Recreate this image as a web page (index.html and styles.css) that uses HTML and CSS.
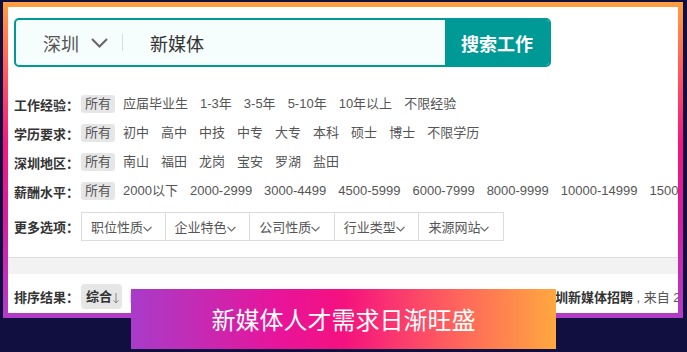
FILE: index.html
```html
<!DOCTYPE html>
<html lang="zh">
<head>
<meta charset="utf-8">
<link rel="stylesheet" href="styles.css">
</head>
<body>
<div class="frame">
  <div class="panel">
    <div class="search">
      <div class="city">
        <span>深圳</span>
        <svg class="chev" width="17" height="10" viewBox="0 0 17 10"><path d="M1 1 L8.5 8.5 L16 1" fill="none" stroke="#666" stroke-width="2"/></svg>
        <span class="divider"></span>
      </div>
      <div class="query">新媒体</div>
      <div class="btn">搜索工作</div>
    </div>

    <div class="filters">
      <div class="row">
        <span class="label">工作经验：</span>
        <span class="opt on">所有</span><span class="opt">应届毕业生</span><span class="opt">1-3年</span><span class="opt">3-5年</span><span class="opt">5-10年</span><span class="opt">10年以上</span><span class="opt">不限经验</span>
      </div>
      <div class="row">
        <span class="label">学历要求：</span>
        <span class="opt on">所有</span><span class="opt">初中</span><span class="opt">高中</span><span class="opt">中技</span><span class="opt">中专</span><span class="opt">大专</span><span class="opt">本科</span><span class="opt">硕士</span><span class="opt">博士</span><span class="opt">不限学历</span>
      </div>
      <div class="row">
        <span class="label">深圳地区：</span>
        <span class="opt on">所有</span><span class="opt">南山</span><span class="opt">福田</span><span class="opt">龙岗</span><span class="opt">宝安</span><span class="opt">罗湖</span><span class="opt">盐田</span>
      </div>
      <div class="row">
        <span class="label">薪酬水平：</span>
        <span class="opt on">所有</span><span class="opt">2000以下</span><span class="opt">2000-2999</span><span class="opt">3000-4499</span><span class="opt">4500-5999</span><span class="opt">6000-7999</span><span class="opt">8000-9999</span><span class="opt">10000-14999</span><span class="opt">15000-19999</span>
      </div>
      <div class="row more">
        <span class="label">更多选项：</span>
        <div class="boxes">
          <div class="box">职位性质<svg class="dd" width="9" height="6" viewBox="0 0 9 6"><path d="M0.5 0.8 L4.5 4.8 L8.5 0.8" fill="none" stroke="#666" stroke-width="1.2"/></svg></div>
          <div class="box">企业特色<svg class="dd" width="9" height="6" viewBox="0 0 9 6"><path d="M0.5 0.8 L4.5 4.8 L8.5 0.8" fill="none" stroke="#666" stroke-width="1.2"/></svg></div>
          <div class="box">公司性质<svg class="dd" width="9" height="6" viewBox="0 0 9 6"><path d="M0.5 0.8 L4.5 4.8 L8.5 0.8" fill="none" stroke="#666" stroke-width="1.2"/></svg></div>
          <div class="box">行业类型<svg class="dd" width="9" height="6" viewBox="0 0 9 6"><path d="M0.5 0.8 L4.5 4.8 L8.5 0.8" fill="none" stroke="#666" stroke-width="1.2"/></svg></div>
          <div class="box">来源网站<svg class="dd" width="9" height="6" viewBox="0 0 9 6"><path d="M0.5 0.8 L4.5 4.8 L8.5 0.8" fill="none" stroke="#666" stroke-width="1.2"/></svg></div>
        </div>
      </div>
    </div>

    <div class="sep"></div>

    <div class="row sort">
      <span class="label">排序结果：</span>
      <span class="sortchip">综合<svg class="arrow" width="6" height="11" viewBox="0 0 6 11"><path d="M3 0 V10 M0.6 7.4 L3 10 L5.4 7.4" fill="none" stroke="#888" stroke-width="1"/></svg></span>
      <span class="pipe">|</span>
      <span class="result"><b>深圳新媒体招聘</b> , 来自 23 个招聘网站</span>
    </div>
  </div>
</div>
<div class="banner">新媒体人才需求日渐旺盛</div>
</body>
</html>
```

FILE: styles.css
```css
html, body {
  margin: 0;
  padding: 0;
}
body {
  width: 687px;
  height: 352px;
  overflow: hidden;
  position: relative;
  background: #110f3f;
  font-family: "Liberation Sans", "Noto Sans CJK SC", sans-serif;
}
.frame {
  margin: 2px 0 0 3px;
  width: 680px;
  height: 316px;
  padding: 5px;
  box-sizing: border-box;
  background: linear-gradient(180deg, #ff9f40 0%, #ff5a5e 22%, #f4167f 45%, #d61e9f 70%, #b13cc9 100%);
}
.panel {
  background: #fff;
  height: 100%;
  overflow: hidden;
  padding: 11px 0 0 6px;
  box-sizing: border-box;
}
.search {
  display: flex;
  width: 537px;
  height: 49px;
  border: 2px solid #009a96;
  border-radius: 5px;
  box-sizing: border-box;
  background: #f5fdfd;
  overflow: hidden;
}
.city {
  display: flex;
  align-items: center;
  padding-left: 27px;
  font-size: 18px;
  color: #555;
  font-family: "Noto Sans CJK SC", sans-serif;
}
.chev {
  margin-left: 12px;
  margin-top: 1px;
}
.divider {
  width: 1px;
  height: 17px;
  background: #dcdcdc;
  margin-left: 14px;
}
.query {
  flex: 1;
  display: flex;
  align-items: center;
  padding-left: 27px;
  font-size: 18px;
  color: #333;
  font-family: "Noto Sans CJK SC", sans-serif;
}
.btn {
  width: 104px;
  background: #009a96;
  color: #fff;
  font-weight: bold;
  font-size: 18px;
  display: flex;
  align-items: center;
  justify-content: center;
  font-family: "Noto Sans CJK SC", sans-serif;
}
.filters {
  margin-top: 22.5px;
}
.row {
  display: flex;
  align-items: center;
  height: 29px;
  font-size: 13px;
  white-space: nowrap;
}
.label {
  flex: none;
  width: 67px;
  font-weight: bold;
  color: #333;
}
.opt {
  flex: none;
  padding: 0 4px;
  margin-right: 4px;
  line-height: 18px;
  color: #555;
  border-radius: 3px;
}
.opt.on {
  background: #e6e6e6;
}
.more {
  margin-top: 6.5px;
}
.boxes {
  display: flex;
}
.box {
  width: 84.6px;
  height: 29px;
  box-sizing: border-box;
  border: 1px solid #dcdcdc;
  border-left: none;
  display: flex;
  align-items: center;
  padding-left: 9px;
  color: #555;
}
.box:first-child {
  border-left: 1px solid #dcdcdc;
}
.dd {
  margin-top: 5px;
}
.sep {
  margin-top: 16px;
  margin-left: -6px;
  height: 17px;
  box-sizing: border-box;
  background: #f2f2f2;
  border-top: 1px solid #dedede;
}
.sort {
  margin-top: 10px;
  height: 25px;
}
.sortchip {
  height: 25px;
  line-height: 25px;
  padding: 0 3px 0 5px;
  background: #e6e6e6;
  border-radius: 4px;
  color: #333;
  font-weight: bold;
  display: flex;
  align-items: center;
}
.arrow {
  margin-left: 1px;
  margin-top: 3px;
}
.pipe {
  margin-left: 7px;
  color: #ccc;
  font-size: 11px;
}
.result {
  margin-left: 410px;
  color: #555;
}
.result b {
  color: #333;
}
.banner {
  position: absolute;
  left: 131px;
  top: 289px;
  width: 425px;
  height: 60px;
  line-height: 60px;
  text-align: center;
  color: #fff;
  font-size: 24px;
  font-family: "Noto Sans CJK SC", sans-serif;
  background: linear-gradient(90deg, #a83cc9 0%, #e8149a 35%, #f5117f 50%, #ff5f5e 75%, #ffa83f 100%);
}
```
